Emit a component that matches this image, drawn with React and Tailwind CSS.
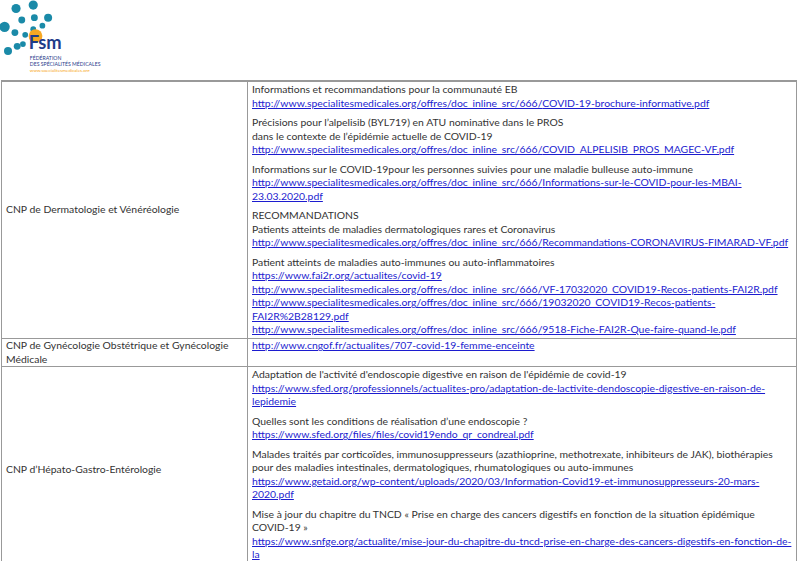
export default function App(){
const A=({children})=><a href="#" className="text-[#1c1ccf] underline block">{children}</a>;
const P=({children})=><div className="mb-[6px] last:mb-0">{children}</div>;
const base="http://www.specialitesmedicales.org/offres/doc_inline_src/666/";
return <div className="w-[800px] h-[561px] overflow-hidden bg-white text-[#333] text-[10.4px] leading-[13.5px]" style={{fontFamily:"Lato, 'Open Sans', sans-serif"}}>
<div className="h-[80px] relative">
<svg width="110" height="72" viewBox="0 0 96 62" className="absolute left-0 top-0">
{[[14,7,4],[29,4,4],[42,15,3.5],[30,15,3],[19,17,3],[29,25,2.5],[4,23,4.5],[13,28,3],[22,30,2.5],[37,22,2.5],[20,38,2.5],[15,40,3],[7,44,3.5]].map((c,i)=><circle key={i} cx={c[0]} cy={c[1]} r={c[2]} fill="#1a8aa8"/>)}
<circle cx="31" cy="31" r="6" fill="#f7a823"/>
<text x="25" y="42" fill="#1f3c8a" fontSize="16" fontWeight="700" fontFamily="Lato, sans-serif">Fsm</text>
<text x="26" y="52" fill="#1f3c8a" fontSize="4.5" fontFamily="Lato, sans-serif">FÉDÉRATION</text>
<text x="26" y="57" fill="#1f3c8a" fontSize="4.5" fontFamily="Lato, sans-serif">DES SPÉCIALITÉS MÉDICALES</text>
<text x="26" y="62" fill="#f7a823" fontSize="4" fontFamily="Lato, sans-serif">www.specialitesmedicales.org</text>
</svg>
</div>
<div className="border-t-2 border-l border-[#999] ml-[1px] mr-[3px]">
<div className="flex border-b border-[#999] min-h-[257px]">
<div className="w-[246px] shrink-0 border-r border-[#999] flex items-center px-[4px]">CNP de Dermatologie et Vénéréologie</div>
<div className="flex-1 px-[4px] pt-[1px] border-r border-[#999]">
<P>Informations et recommandations pour la communauté EB<A>{base}COVID-19-brochure-informative.pdf</A></P>
<P>Précisions pour l’alpelisib (BYL719) en ATU nominative dans le PROS<br/>dans le contexte de l’épidémie actuelle de COVID-19<A>{base}COVID_ALPELISIB_PROS_MAGEC-VF.pdf</A></P>
<P>Informations sur le COVID-19pour les personnes suivies pour une maladie bulleuse auto-immune<A>{base}Informations-sur-le-COVID-pour-les-MBAI-23.03.2020.pdf</A></P>
<P>RECOMMANDATIONS<br/>Patients atteints de maladies dermatologiques rares et Coronavirus<A>{base}Recommandations-CORONAVIRUS-FIMARAD-VF.pdf</A></P>
<P>Patient atteints de maladies auto-immunes ou auto-inflammatoires<A>https://www.fai2r.org/actualites/covid-19</A><A>{base}VF-17032020_COVID19-Recos-patients-FAI2R.pdf</A><A>{base}19032020_COVID19-Recos-patients-FAI2R%2B28129.pdf</A><A>{base}9518-Fiche-FAI2R-Que-faire-quand-le.pdf</A></P>
</div></div>
<div className="flex border-b border-[#999] min-h-[27px]">
<div className="w-[246px] shrink-0 border-r border-[#999] px-[4px]">CNP de Gynécologie Obstétrique et Gynécologie Médicale</div>
<div className="flex-1 px-[4px] border-r border-[#999]"><A>http://www.cngof.fr/actualites/707-covid-19-femme-enceinte</A></div></div>
<div className="flex min-h-[200px]">
<div className="w-[246px] shrink-0 border-r border-[#999] flex items-center px-[4px] pt-[6px]">CNP d’Hépato-Gastro-Entérologie</div>
<div className="flex-1 px-[4px] pt-[1px] border-r border-[#999]">
<P>Adaptation de l'activité d'endoscopie digestive en raison de l'épidémie de covid-19<A>https://www.sfed.org/professionnels/actualites-pro/adaptation-de-lactivite-dendoscopie-digestive-en-raison-de-lepidemie</A></P>
<P>Quelles sont les conditions de réalisation d’une endoscopie ?<A>https://www.sfed.org/files/files/covid19endo_qr_condreal.pdf</A></P>
<P>Malades traités par corticoïdes, immunosuppresseurs (azathioprine, methotrexate, inhibiteurs de JAK), biothérapies pour des maladies intestinales, dermatologiques, rhumatologiques ou auto-immunes<A>https://www.getaid.org/wp-content/uploads/2020/03/Information-Covid19-et-immunosuppresseurs-20-mars-2020.pdf</A></P>
<P>Mise à jour du chapitre du TNCD « Prise en charge des cancers digestifs en fonction de la situation épidémique COVID-19 »<A>https://www.snfge.org/actualite/mise-jour-du-chapitre-du-tncd-prise-en-charge-des-cancers-digestifs-en-fonction-de-la</A></P>
</div></div>
</div></div>;}
